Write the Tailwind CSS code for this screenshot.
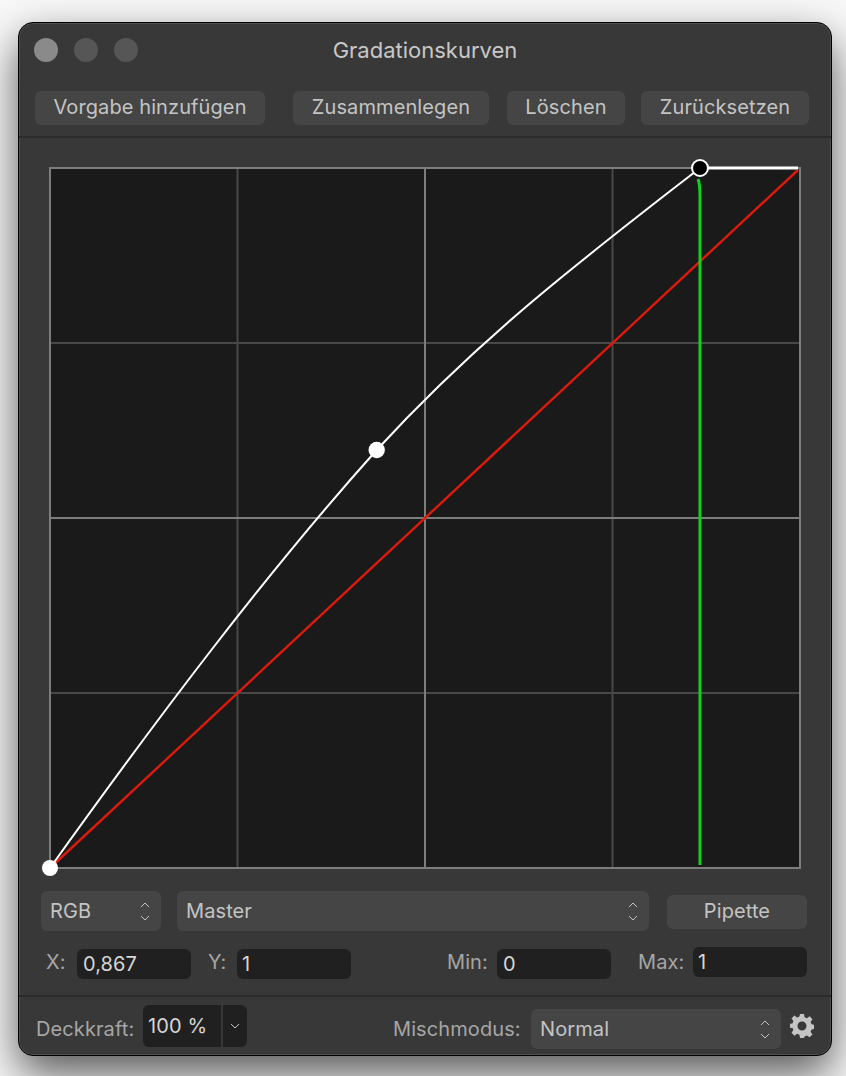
<!DOCTYPE html>
<html lang="de">
  <head>
    <meta charset="UTF-8" />
    <title>Gradationskurven</title>
    <script src="https://cdn.jsdelivr.net/npm/@tailwindcss/browser@4"></script>
  </head>
  <body class="bg-[#f8f8f8] w-[846px] h-[1076px] overflow-hidden font-['Inter','Noto_Sans',sans-serif] text-[20px] leading-[30px] tracking-[0.1px] text-[#c4c4c4]">
    <div class="pt-[22px] pl-[18px]">
      <!-- Window -->
      <div class="w-[814px] h-[1034px] flex flex-col bg-[#383838] rounded-[15px] border border-black shadow-[0_18px_44px_rgba(0,0,0,0.65)] inset-ring inset-ring-[#505050]">
        <!-- Title bar -->
        <div class="relative h-[54px] shrink-0 flex items-center justify-center">
          <div class="absolute left-[15px] top-[15px] flex gap-[16px]">
            <span class="size-6 rounded-full bg-[#8a8a8a]"></span>
            <span class="size-6 rounded-full bg-[#565656]"></span>
            <span class="size-6 rounded-full bg-[#565656]"></span>
          </div>
          <span class="text-[22px] tracking-normal text-[#c8c8c8]">Gradationskurven</span>
        </div>

        <!-- Toolbar -->
        <div class="h-[61px] shrink-0 flex items-start pt-[14px] pl-[16px] border-b-2 border-[#2c2c2c]">
          <button class="w-[230px] h-[34px] pb-[2px] rounded-md bg-[#454545]">Vorgabe hinzufügen</button>
          <button class="w-[196px] h-[34px] pb-[2px] ml-[28px] rounded-md bg-[#454545]">Zusammenlegen</button>
          <button class="w-[118px] h-[34px] pb-[2px] ml-[18px] rounded-md bg-[#454545]">Löschen</button>
          <button class="w-[168px] h-[34px] pb-[2px] ml-[16px] rounded-md bg-[#454545]">Zurücksetzen</button>
        </div>

        <!-- Curve graph, 750x700 -->
        <div class="pl-[31px] pt-[30px] shrink-0">
          <svg class="block overflow-visible" width="750" height="700" viewBox="0 0 750 700">
            <rect x="0" y="0" width="750" height="700" fill="#1a1a1a" />
            <g fill="none" stroke-width="2">
              <path d="M187.500 0V700M562.500 0V700M0 175H750M0 525H750" stroke="#484848" />
              <path d="M375 0V700M0 350H750" stroke="#7d7d7d" />
              <rect x="0" y="0" width="750" height="700" stroke="#7d7d7d" />
              <path d="M0 700L748 2" stroke="#dd1a0c" stroke-width="2.400" />
              <path d="M650 697V30Q650 15 648 11" stroke="#14d01e" stroke-width="3" />
              <path d="M0 700C108.700 548 217.300 404 326.700 282C434 165 542 84 650 0" stroke="#ffffff" stroke-width="2" />
              <path d="M650 0H748" stroke="#ffffff" stroke-width="3" />
            </g>
            <circle cx="0" cy="700" r="8" fill="#ffffff" />
            <circle cx="326.700" cy="282" r="8.200" fill="#ffffff" />
            <circle cx="650" cy="0" r="8" fill="#000000" stroke="#ffffff" stroke-width="2" />
          </svg>
        </div>

        <!-- Channel row -->
        <div class="flex items-center pl-[22px] mt-[23px] h-[40px] shrink-0">
          <div class="w-[120px] h-[40px] rounded-md bg-[#454545] flex items-center justify-between pl-[9px] pr-[10px]">
            <span>RGB</span>
            <svg width="12" height="24" viewBox="0 0 12 24" fill="none" stroke="#c4c4c4" stroke-width="1"><path d="M2 8L6 4L10 8M2 17L6 21L10 17" /></svg>
          </div>
          <div class="w-[472px] h-[40px] ml-[16px] rounded-md bg-[#454545] flex items-center justify-between pl-[9px] pr-[10px]">
            <span>Master</span>
            <svg width="12" height="24" viewBox="0 0 12 24" fill="none" stroke="#c4c4c4" stroke-width="1"><path d="M2 8L6 4L10 8M2 17L6 21L10 17" /></svg>
          </div>
          <button class="w-[140px] h-[34px] mt-[2px] pb-[2px] ml-[18px] rounded-md bg-[#454545]">Pipette</button>
        </div>

        <!-- Values row -->
        <div class="flex items-start pl-[27px] mt-[16px] h-[32px] shrink-0 text-[#a6a6a6]">
          <span class="w-[31px]">X:</span>
          <span class="w-[114px] h-[30px] px-[6px] mt-[2px] rounded-md bg-[#202020] text-[#d6d6d6]">0,867</span>
          <span class="w-[29px] ml-[17px]">Y:</span>
          <span class="w-[114px] h-[30px] px-[5px] mt-[2px] rounded-md bg-[#202020] text-[#d6d6d6]">1</span>
          <span class="w-[50px] ml-[96px]">Min:</span>
          <span class="w-[114px] h-[30px] px-[6px] mt-[2px] rounded-md bg-[#202020] text-[#d6d6d6]">0</span>
          <span class="w-[55px] ml-[27px]">Max:</span>
          <span class="w-[114px] h-[30px] px-[5px] rounded-md bg-[#202020] text-[#d6d6d6]">1</span>
        </div>

        <!-- Bottom row -->
        <div class="flex items-center mt-[16px] pl-[17px] grow border-t-2 border-[#2c2c2c] text-[#a6a6a6]">
          <span class="w-[107px] mt-[6px]">Deckkraft:</span>
          <div class="flex w-[104px] h-[42px] rounded-md overflow-hidden bg-[#202020] text-[#d6d6d6]">
            <span class="w-[80px] pl-[5px] leading-[42px] border-r-2 border-[#383838]">100 %</span>
            <span class="flex-1 flex items-center justify-center">
              <svg width="10" height="8" viewBox="0 0 10 8" fill="none" stroke="#c4c4c4" stroke-width="1"><path d="M1 2L5 6L9 2" /></svg>
            </span>
          </div>
          <span class="ml-[146px] w-[138px] mt-[6px]">Mischmodus:</span>
          <div class="w-[250px] h-[40px] mt-[6px] rounded-md bg-[#454545] text-[#c4c4c4] flex items-center justify-between pl-[9px] pr-[10px]">
            <span>Normal</span>
            <svg width="12" height="24" viewBox="0 0 12 24" fill="none" stroke="#c4c4c4" stroke-width="1"><path d="M2 8L6 4L10 8M2 17L6 21L10 17" /></svg>
          </div>
          <svg class="ml-[9px]" width="24" height="24" viewBox="0 0 24 24" fill="#c4c4c4">
            <path fill-rule="evenodd" d="M10 0h4l.6 3.2 2.3 1 2.7-1.9 2.900 2.900-1.900 2.700 1 2.300 3.200.6v4l-3.200.6-1 2.300 1.900 2.700-2.900 2.900-2.700-1.900-2.300 1L14 24h-4l-.6-3.200-2.300-1-2.700 1.900-2.900-2.900 1.900-2.700-1-2.300L-.8 14v-4l3.200-.6 1-2.300-1.900-2.700 2.900-2.900 2.700 1.900 2.300-1zM12 7.500a4.500 4.500 0 1 0 0 9 4.500 4.500 0 0 0 0-9z" />
          </svg>
        </div>
      </div>
    </div>
  </body>
</html>
